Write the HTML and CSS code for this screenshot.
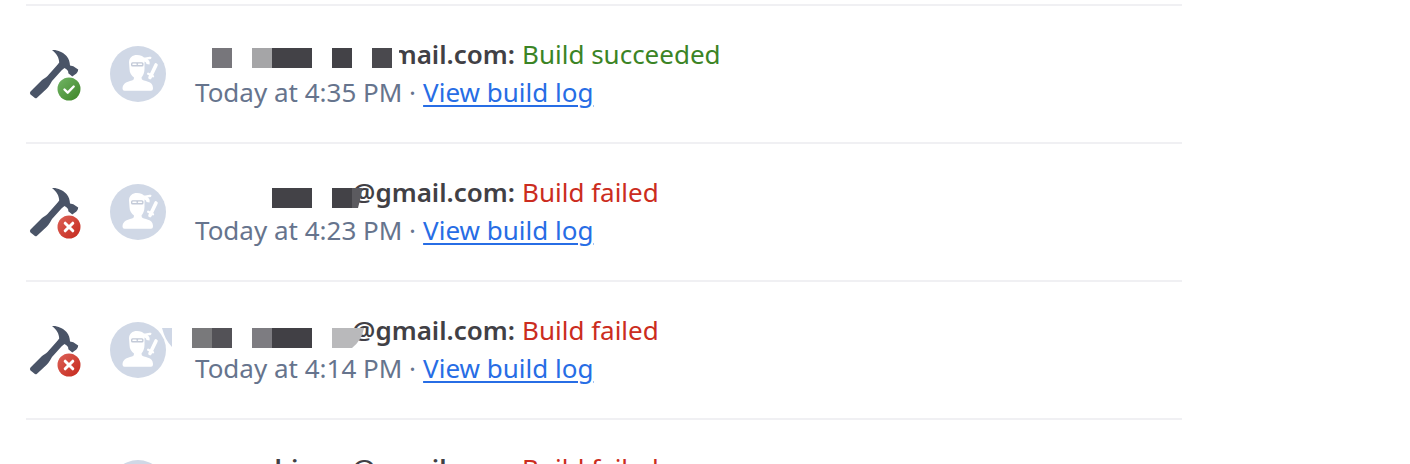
FILE: index.html
```html
<!DOCTYPE html>
<html lang="en">
<head>
  <meta charset="UTF-8" />
  <meta name="viewport" content="width=device-width, initial-scale=1" />
  <title>Build activity</title>
  <link rel="stylesheet" href="styles.css">
</head>
<body>
  <svg class="sprite" aria-hidden="true">
    <defs>
      <linearGradient id="green" x1="0" y1="0" x2="1" y2="1">
        <stop offset="0" stop-color="#72b566" />
        <stop offset="1" stop-color="#3d8527" />
      </linearGradient>
      <linearGradient id="red" x1="0" y1="0" x2="1" y2="1">
        <stop offset="0" stop-color="#dc6258" />
        <stop offset="1" stop-color="#c5281c" />
      </linearGradient>
    </defs>
    <symbol id="hammer" viewBox="0 0 56 56">
      <path fill="#4a5467" d="M26 4C31 3.500 37 6 40.500 10C43 13 43.800 16 44 19.500L47.300 20.300L52.200 23.500C52 26 50.700 27.500 49 28.500L46.300 30.500L42.300 27.200C42.600 25.300 41.500 23.500 38.500 22L35.700 24.300L26 35C24.500 37.500 23 40.500 20.700 42.800L11 51.700Q9.500 53 8 51.300L4.500 48.500Q3.300 47 4.500 45.500L15.500 34.500C17.500 32.500 19.800 32 21.500 30L31.500 18.800L33.200 16.500C33 12 31 8 26 4Z" />
    </symbol>
    <symbol id="ok" viewBox="0 0 56 56">
      <circle cx="43" cy="43" r="11.500" fill="url(#green)" />
      <path d="M38.500 43.500l3.200 3.200 6-6.200" fill="none" stroke="#fff" stroke-width="2.400" stroke-linecap="round" stroke-linejoin="round" />
    </symbol>
    <symbol id="bad" viewBox="0 0 56 56">
      <circle cx="43" cy="43" r="11.500" fill="url(#red)" />
      <path d="M39.200 39.200l7.600 7.600M46.800 39.200l-7.600 7.600" fill="none" stroke="#fff" stroke-width="3" stroke-linecap="round" />
    </symbol>
    <symbol id="ninja" viewBox="0 0 56 56">
      <circle cx="28" cy="28" r="28" fill="#d0d8e6" />
      <path fill="#fff" d="M19 16.500C19 11.500 22.500 9 27 9C30.500 9 32.500 10 34 11.500C36.500 11.500 38.500 10 41.500 11L41 13L37.500 13.500C39.500 14.500 40 16 39.500 18.500L36.500 18Q36.500 16 34.500 15.500V23C34.500 27 33 29.500 31.500 31.500C31.500 34 33 34.500 36 35L40 36.500C42.500 38 43 40.500 43 42.500Q43 44.700 41 44.700H14.500Q12.500 44.700 12.500 42.500C12.500 40 13.500 38 16 36.500L20 35C23 34.500 24 34 24 31.500C21.500 29.500 19.500 27 19.500 23Z" />
      <rect x="21" y="16.200" width="12.500" height="4.200" rx="1.500" fill="#c3cad8" />
      <path d="M23 18.300h3M28.500 18.300h3" stroke="#fff" stroke-width="1.600" stroke-linecap="round" />
      <path d="M40 31.500l6-12.500" stroke="#fff" stroke-width="3.600" stroke-linecap="round" />
      <path d="M38.200 27.800l4.800 2.400" stroke="#fff" stroke-width="2.400" stroke-linecap="round" />
    </symbol>
  </svg>

  <ul class="builds">
    <li class="build">
      <svg class="icon" role="img" aria-label="Build succeeded"><use href="#hammer" /><use href="#ok" /></svg>
      <svg class="icon" aria-hidden="true"><use href="#ninja" /></svg>
      <div class="info">
        <p class="line">
          <span class="name">mail.com:
            <svg class="mask" viewBox="0 0 360 38" aria-hidden="true">
              <path fill="#fff" d="M180 4h59v30h-59z" />
              <path fill="#77767b" d="M52 13h20v20H52z" />
              <path fill="#a5a5a7" d="M92 13h20v20H92z" />
              <path fill="#434247" d="M112 13h40v20h-40zM172 13h20v20h-20z" />
              <path fill="#4a494e" d="M212 13h20v20h-20z" />
            </svg>
          </span>
          <span class="status success">Build succeeded</span>
        </p>
        <p class="line meta">Today at 4:35 PM · <a href="#log-435">View build log</a></p>
      </div>
    </li>
    <li class="build">
      <svg class="icon" role="img" aria-label="Build failed"><use href="#hammer" /><use href="#bad" /></svg>
      <svg class="icon" aria-hidden="true"><use href="#ninja" /></svg>
      <div class="info">
        <p class="line">
          <span class="name">@gmail.com:
            <svg class="mask" viewBox="0 0 360 38" aria-hidden="true">
              <path fill="#434247" d="M112 15h40v20h-40zM172 15h20v20h-20z" />
              <path fill="#5b5a5f" d="M192 15h10l-1 8-3 12h-6z" />
            </svg>
          </span>
          <span class="status failed">Build failed</span>
        </p>
        <p class="line meta">Today at 4:23 PM · <a href="#log-423">View build log</a></p>
      </div>
    </li>
    <li class="build">
      <svg class="icon" role="img" aria-label="Build failed"><use href="#hammer" /><use href="#bad" /></svg>
      <svg class="icon" aria-hidden="true"><use href="#ninja" /></svg>
      <div class="info">
        <p class="line">
          <span class="name">@gmail.com:
            <svg class="mask" viewBox="0 0 360 38" aria-hidden="true">
              <path fill="#cfd7e6" d="M2 17h10v19Q5 29 2 17z" />
              <path fill="#79797b" d="M32 17h20v20H32z" />
              <path fill="#535257" d="M52 17h20v20H52z" />
              <path fill="#7d7c81" d="M92 17h20v20H92z" />
              <path fill="#414045" d="M112 17h40v20h-40z" />
              <path fill="#b9b9bb" d="M172 17h32q-2 12-12 20h-20z" />
            </svg>
          </span>
          <span class="status failed">Build failed</span>
        </p>
        <p class="line meta">Today at 4:14 PM · <a href="#log-414">View build log</a></p>
      </div>
    </li>
    <li class="build">
      <svg class="icon" role="img" aria-label="Build failed"><use href="#hammer" /><use href="#bad" /></svg>
      <svg class="icon" aria-hidden="true"><use href="#ninja" /></svg>
      <div class="info">
        <p class="line">
          <span class="name">hinow@gmail.com:</span>
          <span class="status failed">Build failed</span>
        </p>
      </div>
    </li>
  </ul>
</body>
</html>
```
FILE: styles.css
```css
body {
  margin: 0;
  height: 100vh;
  overflow: hidden;
  background: #fff;
  color: #414045;
  font-family: "Noto Sans", sans-serif;
  font-size: 26px;
  line-height: 38px;
}

.sprite {
  position: absolute;
  width: 0;
  height: 0;
}

.builds {
  list-style: none;
  width: 82%;
  margin: 4px 0 0 26px;
  padding: 0;
}

.build {
  display: flex;
  align-items: center;
  gap: 28px;
  padding: 29px 0;
  border-top: 2px solid #f0f0f3;
}

.icon {
  flex: none;
  width: 56px;
  height: 56px;
}

.info {
  min-height: 76px;
  padding: 0 0 2px 1px;
}

.line {
  display: flex;
  gap: 7px;
  margin: 0;
  white-space: nowrap;
}

.name {
  position: relative;
  width: 320px;
  text-align: right;
  font-weight: 600;
}

/* covers the private part of the address */
.mask {
  position: absolute;
  top: 0;
  left: -35px;
  width: 360px;
  height: 38px;
}

.success {
  color: #3b8425;
}

.failed {
  color: #cb2c20;
}

.meta {
  color: #66748d;
}

.meta a {
  color: #276de5;
  text-decoration: underline;
  text-decoration-thickness: 2px;
  text-underline-offset: 3px;
}
```
